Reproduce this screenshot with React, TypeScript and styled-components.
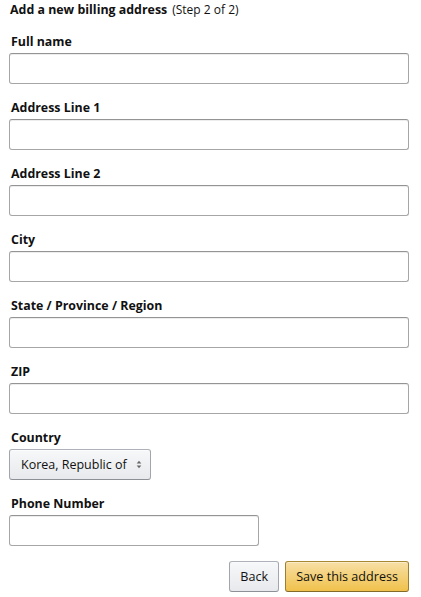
import React from "react";
import styled, { createGlobalStyle } from "styled-components";

const Global = createGlobalStyle`
  html, body { margin: 0; padding: 0; background: #fff; }
  body { font-family: "Open Sans", "Liberation Sans", Arial, sans-serif; color: #111; }
  * { box-sizing: border-box; }
`;

const Page = styled.div`
  width: 400px;
  margin-left: 9px;
  display: flex;
  flex-direction: column;
`;

const Title = styled.h1`
  margin: 0 0 13px 1px;
  font-size: 12.4px;
  line-height: 19px;
  font-weight: 700;
  color: #111;
`;

const Step = styled.span`
  font-weight: 400;
  font-size: 12px;
  margin-left: 5px;
`;

const Field = styled.div`
  display: flex;
  flex-direction: column;
  align-items: flex-start;
  margin-bottom: 14px;
`;

const Label = styled.label`
  font-size: 12.4px;
  font-weight: 700;
  line-height: 19px;
  padding-left: 2px;
  margin-bottom: 2px;
  color: #111;
`;

const Input = styled.input<{ $w?: number }>`
  width: ${(p) => (p.$w ? `${p.$w}px` : "100%")};
  height: 31px;
  border: 1px solid #a6a6a6;
  border-top-color: #949494;
  border-radius: 3px;
  box-shadow: 0 1px 0 rgba(255, 255, 255, 0.5), 0 1px 0 rgba(0, 0, 0, 0.07) inset;
  padding: 3px 7px;
  font: inherit;
  font-size: 13px;
  outline: none;
  background: #fff;
`;

const SelectBox = styled.div`
  width: 142px;
  height: 31px;
  display: flex;
  align-items: center;
  justify-content: space-between;
  padding: 0 8px 0 11px;
  border: 1px solid;
  border-color: #adb1b8 #a2a6ac #8d9096;
  border-radius: 3px;
  background: linear-gradient(to bottom, #f7f8fa, #e7e9ec);
  box-shadow: 0 1px 0 rgba(255, 255, 255, 0.6) inset;
  font-size: 12.5px;
  color: #111;
  cursor: pointer;
`;

const Actions = styled.div`
  display: flex;
  justify-content: flex-end;
  gap: 6px;
  margin-top: 1px;
`;

const Button = styled.button<{ $primary?: boolean }>`
  height: 31px;
  padding: 0 10px;
  border-radius: 3px;
  border: 1px solid;
  font: inherit;
  font-size: 12.6px;
  color: #111;
  cursor: pointer;
  border-color: ${(p) =>
    p.$primary ? "#a88734 #9c7e31 #846a29" : "#adb1b8 #a2a6ac #8d9096"};
  background: ${(p) =>
    p.$primary
      ? "linear-gradient(to bottom, #f7dfa5, #f0c14b)"
      : "linear-gradient(to bottom, #f7f8fa, #e7e9ec)"};
  box-shadow: 0 1px 0 rgba(255, 255, 255, 0.4) inset;
`;

const Arrows = () => (
  <svg width="6" height="9" viewBox="0 0 6 9">
    <path d="M3 0.8 L5.3 3.4 L0.7 3.4 Z" fill="#666" />
    <path d="M3 8.2 L5.3 5.6 L0.7 5.6 Z" fill="#666" />
  </svg>
);

const fields = [
  "Full name",
  "Address Line 1",
  "Address Line 2",
  "City",
  "State / Province / Region",
  "ZIP",
];

export default function App() {
  return (
    <>
      <Global />
      <Page>
        <Title>
          Add a new billing address<Step>(Step 2 of 2)</Step>
        </Title>
        {fields.map((f) => (
          <Field key={f}>
            <Label>{f}</Label>
            <Input type="text" />
          </Field>
        ))}
        <Field>
          <Label>Country</Label>
          <SelectBox>
            <span>Korea, Republic of</span>
            <Arrows />
          </SelectBox>
        </Field>
        <Field>
          <Label>Phone Number</Label>
          <Input type="text" $w={250} />
        </Field>
        <Actions>
          <Button>Back</Button>
          <Button $primary>Save this address</Button>
        </Actions>
      </Page>
    </>
  );
}
